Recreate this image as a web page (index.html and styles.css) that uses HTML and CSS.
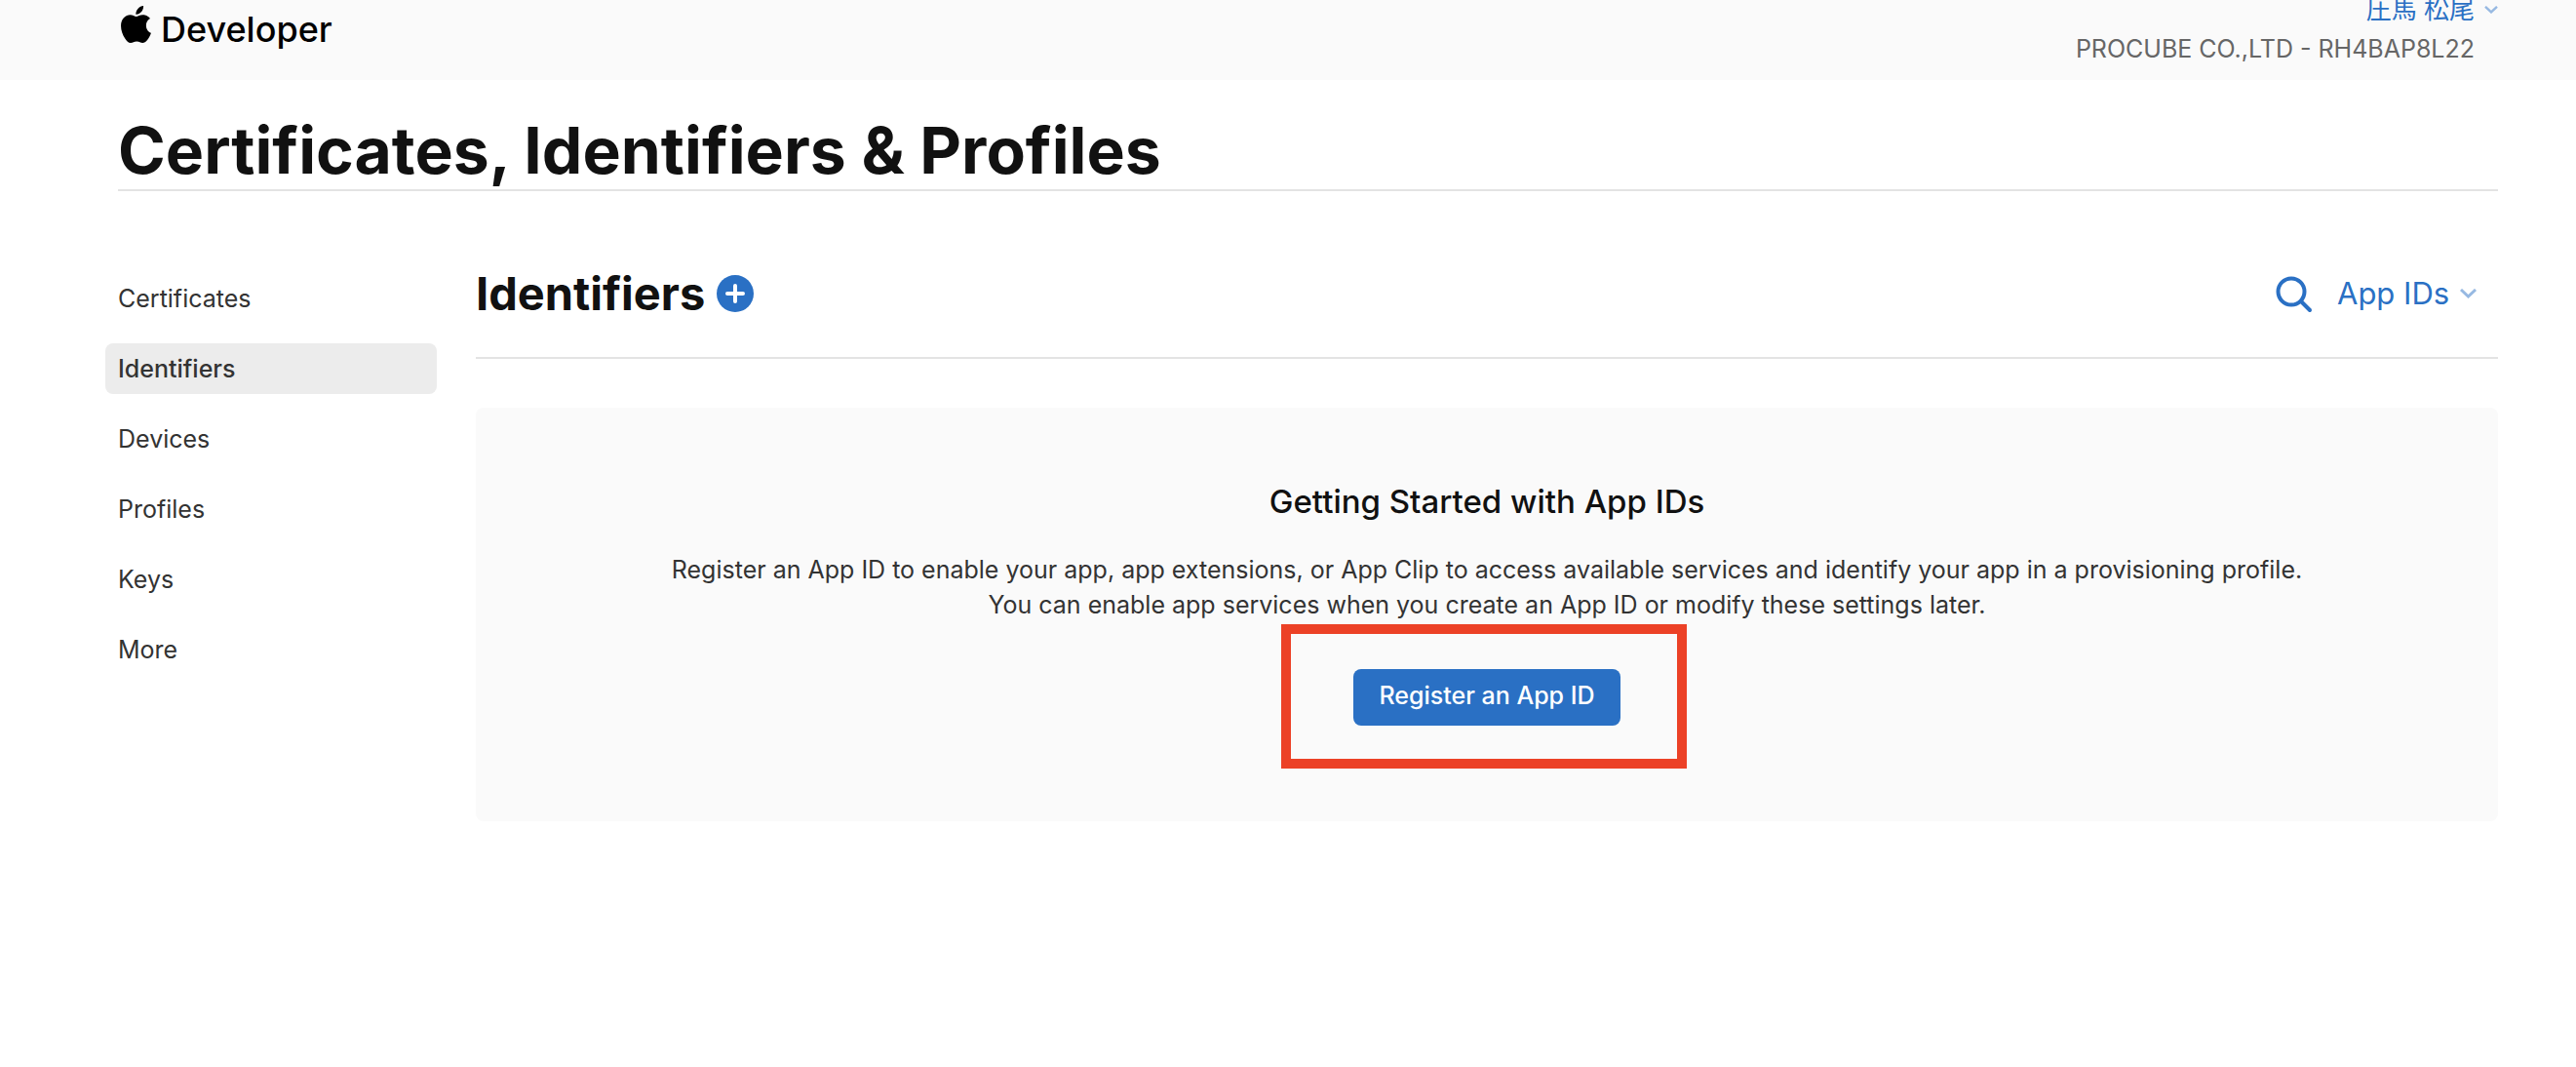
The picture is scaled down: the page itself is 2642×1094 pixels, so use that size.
FILE: index.html
```html
<!DOCTYPE html>
<html lang="en">
<head>
  <meta charset="utf-8">
  <title>Certificates, Identifiers &amp; Profiles - Apple Developer</title>
  <link rel="stylesheet" href="styles.css">
</head>
<body>
  <header class="topbar">
    <a class="brand" href="#">
      <svg class="brand-mark" viewBox="0 0 814 1000" aria-hidden="true"><path d="M788 341c-6 4-108 62-108 190 0 148 130 201 134 202-1 3-21 72-69 142-43 62-87 123-155 123s-85-39-163-39c-76 0-103 41-165 41s-105-57-155-127C46 790 0 663 0 542c0-194 126-297 250-297 66 0 121 43 163 43 39 0 101-46 176-46 29 0 131 3 199 99zM554 159c31-37 53-88 53-139 0-7-1-14-2-20-50 2-110 34-147 76-28 32-55 83-55 135 0 8 1 16 2 18 3 1 8 1 13 1 45 0 102-30 136-71z"/></svg>
      <span>Developer</span>
    </a>
    <div class="account">
      <button class="account-name" type="button">圧馬 松尾
        <svg class="chevron chevron-small" viewBox="0 0 17 10" aria-hidden="true"><path d="M1 1l7.500 7 7.500-7"/></svg>
      </button>
      <span class="account-team">PROCUBE CO.,LTD - RH4BAP8L22</span>
    </div>
  </header>

  <div class="page">
    <h1 class="page-title">Certificates, Identifiers &amp; Profiles</h1>
    <div class="columns">
      <nav class="sidebar">
        <a href="#">Certificates</a>
        <a class="current" href="#" aria-current="page">Identifiers</a>
        <a href="#">Devices</a>
        <a href="#">Profiles</a>
        <a href="#">Keys</a>
        <a href="#">More</a>
      </nav>
      <main class="content">
        <div class="content-head">
          <h2>Identifiers</h2>
          <button class="icon-button" type="button" aria-label="Add identifier">
            <svg class="add-icon" viewBox="0 0 38 38" aria-hidden="true"><circle cx="19" cy="19" r="19"/><path d="M19 11v16M11 19h16"/></svg>
          </button>
          <div class="filters">
            <button class="icon-button" type="button" aria-label="Search">
              <svg class="search-icon" viewBox="0 0 40 40" aria-hidden="true"><circle cx="17" cy="18" r="13.500"/><path d="M27 28l9 9"/></svg>
            </button>
            <label class="type-filter">
              <select aria-label="Identifier type"><option>App IDs</option></select>
              <svg class="chevron" viewBox="0 0 17 10" aria-hidden="true"><path d="M1 1l7.500 7 7.500-7"/></svg>
            </label>
          </div>
        </div>
        <section class="panel">
          <h3>Getting Started with App IDs</h3>
          <p>Register an App ID to enable your app, app extensions, or App Clip to access available services and identify your app in a provisioning profile.<br>You can enable app services when you create an App ID or modify these settings later.</p>
          <div class="action">
            <button class="primary" type="button">Register an App ID</button>
            <span class="highlight"></span>
          </div>
        </section>
      </main>
    </div>
  </div>
</body>
</html>
```
FILE: styles.css
```css
* {
  box-sizing: border-box;
}

body {
  margin: 0;
  background: #fff;
  color: #333;
  font: 25px/36px Inter, "Noto Sans CJK JP", sans-serif;
}

a {
  color: inherit;
  text-decoration: none;
}

button,
select {
  margin: 0;
  padding: 0;
  border: 0;
  background: none;
  color: inherit;
  font: inherit;
}

h1,
h2,
h3,
p {
  margin: 0;
}

svg {
  display: block;
}

.topbar {
  display: flex;
  justify-content: space-between;
  align-items: flex-start;
  padding: 0 80px 12px 124px;
  background: #fafafa;
}

.brand {
  display: flex;
  align-items: flex-start;
  gap: 10px;
  padding-top: 6px;
  color: #000;
  font-size: 36px;
  font-weight: 500;
  line-height: 48px;
}

.brand-mark {
  width: 31px;
  height: 38px;
}

.account {
  display: flex;
  flex-direction: column;
  align-items: flex-end;
  margin-top: -10px;
  line-height: 40px;
}

.account-name {
  display: flex;
  align-items: center;
  gap: 10px;
  color: #2a70c4;
  font-size: 26px;
}

.account-team {
  padding-right: 24px;
  color: #666;
}

.chevron {
  width: 17px;
  height: 10px;
  fill: none;
  stroke: #97b9e2;
  stroke-width: 3;
}

.chevron-small {
  width: 14px;
  height: 8px;
}

.page {
  padding: 32px 80px 80px 121px;
}

.page-title {
  border-bottom: 2px solid #e3e3e3;
  color: #111;
  font-size: 66px;
  font-weight: 700;
  line-height: 80px;
}

.columns {
  display: flex;
  gap: 40px;
  margin-left: -13px;
}

.sidebar {
  display: flex;
  flex: 0 0 340px;
  flex-direction: column;
  gap: 20px;
  padding-top: 84px;
}

.sidebar a {
  padding: 8px 13px;
  border-radius: 8px;
}

.sidebar .current {
  background: #ececec;
  font-weight: 500;
}

.content {
  flex: 1;
  min-width: 0;
}

.content-head {
  display: flex;
  align-items: center;
  padding: 77px 22px 37px 0;
  border-bottom: 2px solid #e3e3e3;
}

.content-head h2 {
  margin-right: 12px;
  color: #111;
  font-size: 47px;
  font-weight: 700;
  line-height: 56px;
}

.add-icon {
  width: 38px;
  height: 38px;
  fill: #2a70c4;
  stroke: #fff;
  stroke-width: 4;
  stroke-linecap: round;
}

.add-icon circle {
  stroke: none;
}

.filters {
  display: flex;
  align-items: center;
  gap: 24px;
  margin-left: auto;
}

.search-icon {
  width: 40px;
  height: 40px;
  fill: none;
  stroke: #2a70c4;
  stroke-width: 4;
  stroke-linecap: round;
}

.type-filter {
  display: flex;
  align-items: center;
  gap: 10px;
  color: #2a70c4;
  font-size: 31px;
  line-height: 40px;
}

.type-filter select {
  appearance: none;
}

.panel {
  display: flex;
  flex-direction: column;
  align-items: center;
  margin-top: 50px;
  padding: 74px 40px 98px;
  border-radius: 8px;
  background: #fafafa;
  text-align: center;
}

.panel h3 {
  margin-bottom: 30px;
  color: #111;
  font-size: 33px;
  font-weight: 500;
  line-height: 44px;
}

.action {
  position: relative;
  margin-top: 48px;
}

.primary {
  display: block;
  padding: 10px 26px 14px;
  border-radius: 8px;
  background: #2a70c4;
  color: #fff;
  font-weight: 500;
  line-height: 34px;
}

.highlight {
  position: absolute;
  inset: -46px -68px -44px -74px;
  border: 10px solid #ec4126;
  pointer-events: none;
}
```
